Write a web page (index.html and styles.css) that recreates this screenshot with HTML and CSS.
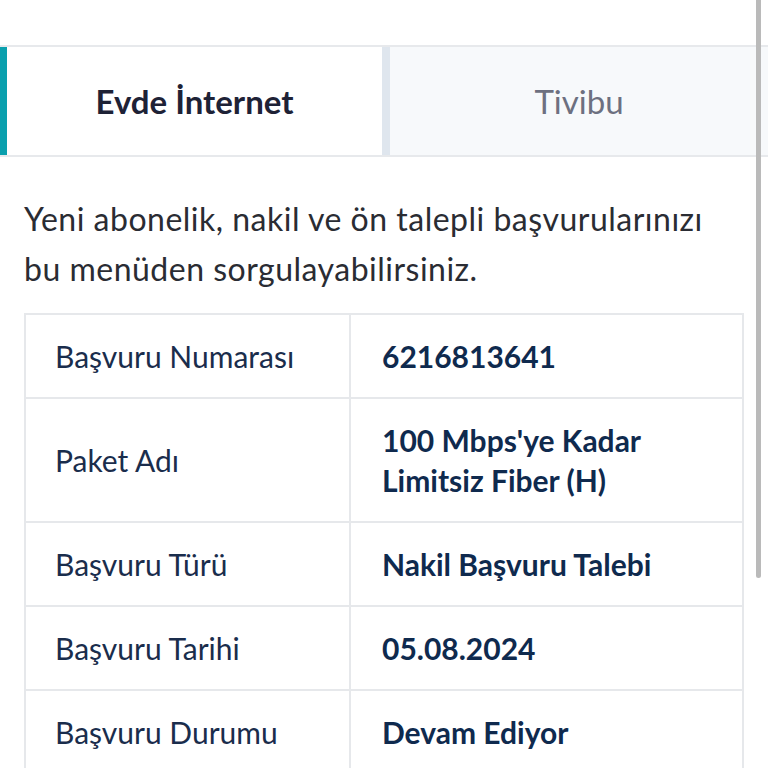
FILE: index.html
```html
<!DOCTYPE html>
<html lang="tr">
<head>
<meta charset="utf-8">
<link rel="stylesheet" href="styles.css">
</head>
<body>
<div class="page">
  <div class="tabs">
    <div class="tab active">Evde İnternet</div>
    <div class="tab-sep"></div>
    <div class="tab">Tivibu</div>
  </div>
  <div class="content">
    <p class="intro">Yeni abonelik, nakil ve ön talepli başvurularınızı bu menüden sorgulayabilirsiniz.</p>
    <table class="info">
      <tr><td class="label">Başvuru Numarası</td><td class="value">6216813641</td></tr>
      <tr><td class="label">Paket Adı</td><td class="value">100 Mbps'ye Kadar Limitsiz Fiber (H)</td></tr>
      <tr><td class="label">Başvuru Türü</td><td class="value">Nakil Başvuru Talebi</td></tr>
      <tr><td class="label">Başvuru Tarihi</td><td class="value">05.08.2024</td></tr>
      <tr><td class="label">Başvuru Durumu</td><td class="value">Devam Ediyor</td></tr>
    </table>
  </div>
  <div class="scrollbar"></div>
</div>
</body>
</html>
```
FILE: styles.css
```css
html, body {
  margin: 0;
  padding: 0;
  background: #ffffff;
}
body {
  font-family: Lato, "Noto Sans", sans-serif;
  overflow: hidden;
  height: 768px;
}
.page {
  position: relative;
  padding-top: 45px;
}
.tabs {
  display: flex;
  height: 108px;
  border-top: 2px solid #e7e9ec;
  border-bottom: 2px solid #e7e9ec;
}
.tab {
  display: flex;
  align-items: center;
  justify-content: center;
  font-size: 33px;
  color: #6d7080;
  background: #f7f9fb;
  flex: 1;
}
.tab.active {
  flex: 0 0 375px;
  background: #ffffff;
  color: #1e2236;
  font-weight: 700;
  border-left: 7px solid #0aa0ae;
}
.tab-sep {
  width: 8px;
  background: #dfe6ee;
}
.content {
  padding: 0 24px;
}
.intro {
  margin: 37px 0 19px 0;
  padding-right: 20px;
  font-size: 32px;
  letter-spacing: 0.5px;
  line-height: 50px;
  color: #2a2c33;
}
.info {
  width: 720px;
  border-collapse: collapse;
  border: 2px solid #e6e8eb;
}
.info td {
  border: 2px solid #e6e8eb;
  padding: 21px 28px 21px 29px;
  font-size: 30px;
  line-height: 40px;
  color: #1a2d4c;
  vertical-align: middle;
}
.info td.label {
  width: 266px;
}
.info td.value {
  font-weight: 700;
  color: #0f2a4e;
  padding-left: 31px;
  padding-right: 70px;
}
.scrollbar {
  position: absolute;
  top: 0;
  left: 756px;
  width: 5px;
  height: 578px;
  background: #bababa;
  border-radius: 0 0 3px 3px;
}
```
